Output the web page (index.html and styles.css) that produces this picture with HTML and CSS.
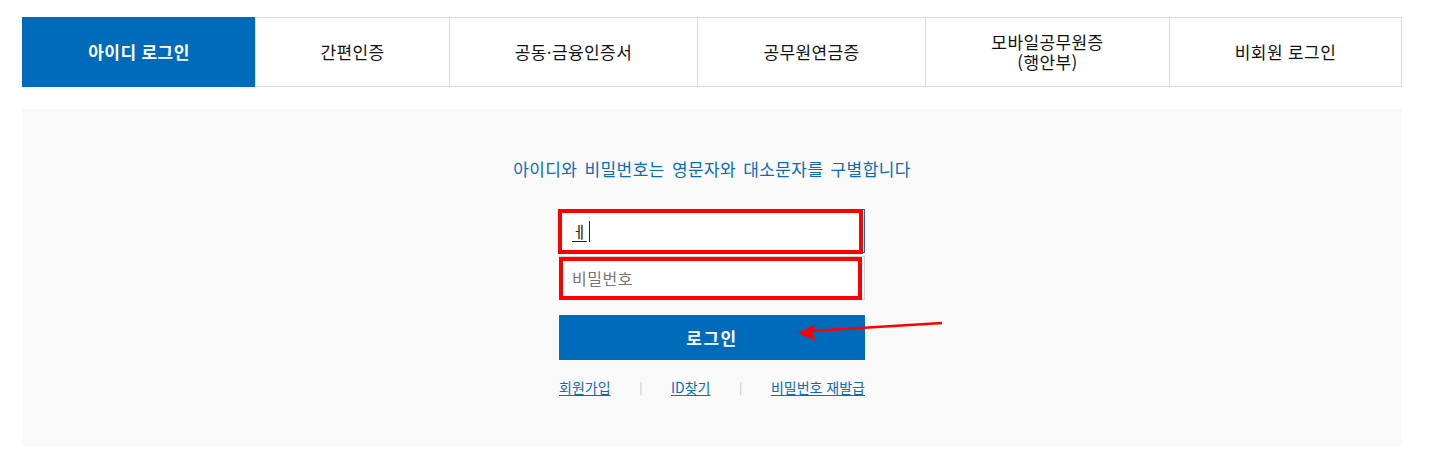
FILE: index.html
```html
<!DOCTYPE html>
<html lang="ko">
<head>
<meta charset="utf-8">
<title>로그인</title>
<link rel="stylesheet" href="styles.css">
</head>
<body>
<div class="page">
  <ul class="tabs">
    <li class="tab active t1">아이디 로그인</li>
    <li class="tab t2">간편인증</li>
    <li class="tab t3">공동·금융인증서</li>
    <li class="tab t4">공무원연금증</li>
    <li class="tab t5">모바일공무원증<br>(행안부)</li>
    <li class="tab t6">비회원 로그인</li>
  </ul>
  <div class="panel">
    <p class="notice">아이디와 비밀번호는 영문자와 대소문자를 구별합니다</p>
    <div class="form">
      <div class="field focused"><span class="compose">ㅔ</span><span class="caret"></span></div>
      <div class="field"><span class="placeholder">비밀번호</span></div>
      <button class="login-btn" type="button">로그인</button>
      <div class="links">
        <a href="#">회원가입</a>
        <span class="sep">|</span>
        <a href="#">ID찾기</a>
        <span class="sep">|</span>
        <a href="#">비밀번호 재발급</a>
      </div>
      <div class="mark mark1"></div>
      <div class="mark mark2"></div>
      <svg class="arrow" width="150" height="26" viewBox="0 0 150 26">
        <line x1="16" y1="13" x2="147" y2="5" stroke="#f00" stroke-width="2.6"/>
        <polygon points="3,15 21,6 17,13.5 21,23" fill="#f00"/>
      </svg>
    </div>
  </div>
</div>
</body>
</html>
```
FILE: styles.css
```css
* { box-sizing: border-box; }
html, body { margin: 0; padding: 0; background: #fff; }
body { font-family: "Noto Sans CJK KR", "Noto Sans", sans-serif; color: #111; }
.page { width: 1380px; margin: 17px 0 0 22px; }
.tabs { display: flex; list-style: none; margin: 0; padding: 0; height: 70px; }
.tab {
  display: flex; align-items: center; justify-content: center; text-align: center;
  height: 70px; border-top: 1px solid #dcdcdc; border-bottom: 1px solid #dcdcdc;
  border-left: 1px solid #dcdcdc; font-size: 17px; line-height: 20px; color: #111;
  letter-spacing: 0.4px;
}
.tab.active { background: #006bbb; border-color: #006bbb; color: #fff; font-weight: 700; }
.t1 { width: 233px; }
.t2 { width: 194px; }
.t3 { width: 248px; }
.t4 { width: 228px; }
.t5 { width: 244px; }
.t6 { width: 233px; border-right: 1px solid #dcdcdc; }
.panel { margin-top: 22px; height: 337px; background: #f9f9f9; padding-top: 48px; }
.notice {
  margin: 0; text-align: center; color: #0a6cbb; font-size: 17px; line-height: 24px;
  letter-spacing: 0.4px; word-spacing: 2px;
}
.form { position: relative; width: 306px; margin: 28px auto 0; }
.field {
  position: relative; height: 44px; background: #fff; border: 1px solid #d3d3d3;
  display: flex; align-items: center; padding-left: 12px; font-size: 16px;
}
.field + .field { margin-top: 3px; }
.field.focused { border-color: #0a6cbb; }
.compose { text-decoration: underline; text-underline-offset: 3px; color: #222; line-height: 20px; }
.caret { display: inline-block; width: 1px; height: 21px; background: #222; margin-left: 2px; }
.placeholder { color: #757575; letter-spacing: 0.5px; }
.login-btn {
  display: block; width: 306px; height: 45px; margin-top: 15px; border: 0;
  background: #006bbb; color: #fff; font-family: inherit; font-size: 17px; font-weight: 700;
  letter-spacing: 1.5px; padding: 0;
}
.links { display: flex; justify-content: space-between; align-items: center; margin-top: 18px; font-size: 14px; line-height: 18px; }
.links a { color: #0a6cbb; text-decoration: underline; text-underline-offset: 2px; }
.sep { color: #c4c4c4; font-size: 12px; }
.mark { position: absolute; border: 4px solid #ff0000; pointer-events: none; }
.mark1 { left: -1px; top: 0; width: 305px; height: 45px; }
.mark2 { left: 0; top: 48px; width: 303px; height: 43px; }
.arrow { position: absolute; left: 236px; top: 109px; }
```
